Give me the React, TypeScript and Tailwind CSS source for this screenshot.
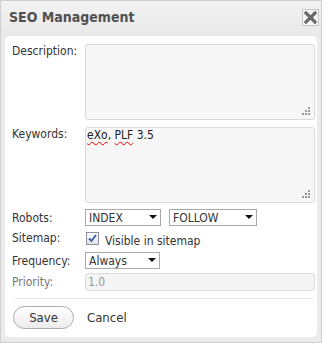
export default function App() {
  const font = { fontFamily: '"DejaVu Sans Condensed", "Liberation Sans", Arial, sans-serif' };

  const Grip = () => (
    <svg className="absolute right-[3px] bottom-[3px]" width="9" height="9" viewBox="0 0 9 9">
      <rect x="6" y="0" width="2" height="2" fill="#9a9a9a" />
      <rect x="3" y="3" width="2" height="2" fill="#9a9a9a" />
      <rect x="6" y="3" width="2" height="2" fill="#9a9a9a" />
      <rect x="0" y="6" width="2" height="2" fill="#9a9a9a" />
      <rect x="3" y="6" width="2" height="2" fill="#9a9a9a" />
      <rect x="6" y="6" width="2" height="2" fill="#9a9a9a" />
    </svg>
  );

  const Caret = () => (
    <svg width="8" height="5" viewBox="0 0 8 5">
      <path d="M0 0 L8 0 L4 4 Z" fill="#111" />
    </svg>
  );

  return (
    <div className="w-[322px] h-[343px] bg-[#ebebeb] border border-[#cfcfcf] flex flex-col text-[12px] text-[#333]" style={font}>
      {/* title bar */}
      <div className="h-[35px] flex items-center justify-between pl-[8px] pr-[2px] pb-[3px] bg-gradient-to-b from-[#f3f3f3] to-[#e8e8e8]">
        <span className="text-[14px] font-bold text-[#505050]">SEO Management</span>
        <div className="w-[17px] h-[17px] border border-[#c4c4c4] bg-[#f7f7f7] flex items-center justify-center">
          <svg width="13" height="13" viewBox="0 0 13 13">
            <path d="M2 2 L11 11 M11 2 L2 11" stroke="#6a6a6a" strokeWidth="3.2" strokeLinecap="square" />
          </svg>
        </div>
      </div>

      {/* body */}
      <div className="mx-[4px] mb-[5px] flex-1 bg-white rounded-[5px] pl-[7px] pr-[2px] pt-[8px] flex flex-col">
        <div className="flex h-[76px]">
          <label className="w-[73px] leading-[14px]">Description:</label>
          <div className="relative flex-1 bg-[#f7f7f7] border border-[#d9d9d9] rounded-[3px]">
            <Grip />
          </div>
        </div>

        <div className="flex h-[76px] mt-[7px]">
          <label className="w-[73px] leading-[14px]">Keywords:</label>
          <div className="relative flex-1 bg-[#f7f7f7] border border-[#d9d9d9] rounded-[3px] px-[1px] leading-[14px] text-[#222]">
            <span className="underline decoration-wavy decoration-[#e00] decoration-1 underline-offset-2">eXo</span>,{" "}
            <span className="underline decoration-wavy decoration-[#e00] decoration-1 underline-offset-2">PLF</span> 3.5
            <Grip />
          </div>
        </div>

        <div className="flex items-center h-[17px] mt-[6px]">
          <label className="w-[73px]">Robots:</label>
          <div className="w-[76px] h-[17px] border border-[#a9a9a9] bg-white flex items-center justify-between px-[3px]">
            <span>INDEX</span>
            <Caret />
          </div>
          <div className="ml-[8px] w-[88px] h-[17px] border border-[#a9a9a9] bg-white flex items-center justify-between px-[3px]">
            <span>FOLLOW</span>
            <Caret />
          </div>
        </div>

        <div className="flex items-center h-[18px] mt-[3px]">
          <label className="w-[73px]">Sitemap:</label>
          <div className="w-[13px] h-[13px] border border-[#8f8f9d] bg-gradient-to-b from-[#fbfbfb] to-[#dfe3ea] flex items-center justify-center ml-[1px]">
            <svg width="9" height="9" viewBox="0 0 9 9">
              <path d="M1 4.5 L3.5 7 L8 1" stroke="#3d5aa8" strokeWidth="1.8" fill="none" />
            </svg>
          </div>
          <span className="ml-[6px] mt-[6px]">Visible in sitemap</span>
        </div>

        <div className="flex items-center h-[17px] mt-[5px]">
          <label className="w-[73px]">Frequency:</label>
          <div className="w-[75px] h-[17px] border border-[#a9a9a9] bg-white flex items-center justify-between px-[3px]">
            <span>Always</span>
            <Caret />
          </div>
        </div>

        <div className="flex items-center h-[18px] mt-[4px]">
          <label className="w-[73px] text-[#777]">Priority:</label>
          <div className="flex-1 h-[18px] border border-[#dcdcdc] bg-[#f4f4f4] rounded-[3px] flex items-center px-[2px] text-[#999]">
            1.0
          </div>
        </div>

        <div className="h-px bg-[#e6e6e6] mt-[7px] mr-[2px] ml-[3px]" />

        <div className="flex items-center mt-[7px] ml-[1px]">
          <button className="w-[61px] h-[23px] rounded-full border border-[#adadad] bg-gradient-to-b from-white to-[#ececec] text-[13px] text-[#333]">
            Save
          </button>
          <span className="ml-[13px] text-[13px] text-[#333]">Cancel</span>
        </div>
      </div>
    </div>
  );
}
